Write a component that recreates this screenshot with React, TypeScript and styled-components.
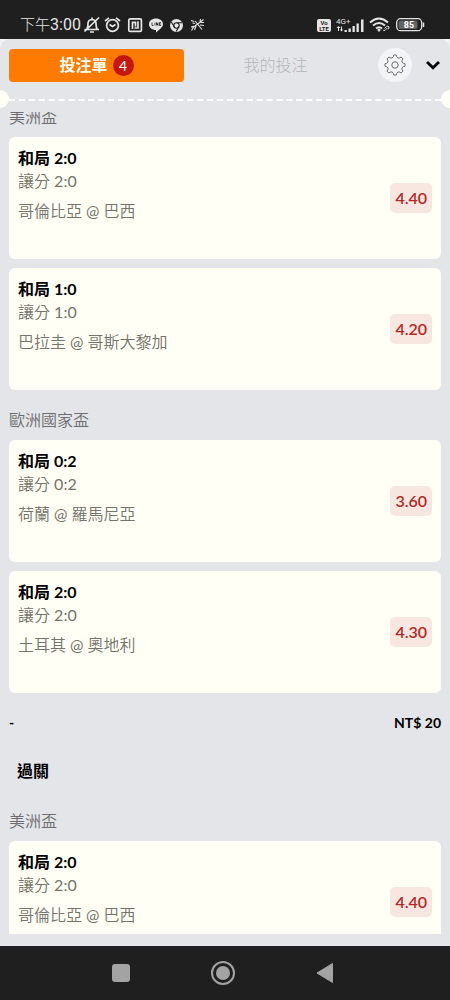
import React from 'react';
import styled, { createGlobalStyle, css } from 'styled-components';

interface Bet {
  title: string;
  handicap: string;
  teams: string;
  odds: string;
}

interface League {
  name: string;
  bets: Bet[];
}

const singles: League[] = [
  {
    name: '美洲盃',
    bets: [
      { title: '和局 2:0', handicap: '讓分 2:0', teams: '哥倫比亞 @ 巴西', odds: '4.40' },
      { title: '和局 1:0', handicap: '讓分 1:0', teams: '巴拉圭 @ 哥斯大黎加', odds: '4.20' },
    ],
  },
  {
    name: '歐洲國家盃',
    bets: [
      { title: '和局 0:2', handicap: '讓分 0:2', teams: '荷蘭 @ 羅馬尼亞', odds: '3.60' },
      { title: '和局 2:0', handicap: '讓分 2:0', teams: '土耳其 @ 奧地利', odds: '4.30' },
    ],
  },
];

const parlay: League[] = [
  {
    name: '美洲盃',
    bets: [
      { title: '和局 2:0', handicap: '讓分 2:0', teams: '哥倫比亞 @ 巴西', odds: '4.40' },
    ],
  },
];

const GlobalStyle = createGlobalStyle`
  * { box-sizing: border-box; }
  body {
    margin: 0;
    background: #1f1f1f;
    font-family: Lato, "Noto Sans CJK TC", sans-serif;
    font-size: 16px;
    line-height: 24px;
  }
  button {
    border: 0;
    padding: 0;
    margin: 0;
    background: none;
    font: inherit;
    cursor: pointer;
  }
  h2, h3, p { margin: 0; font: inherit; }
`;

const lightText = css`
  font-family: Lato, "Noto Sans CJK TC DemiLight", "Noto Sans CJK TC Light", "Noto Sans CJK TC", sans-serif;
  font-weight: 400;
`;

const Screen = styled.div`
  display: flex;
  flex-direction: column;
  height: 100vh;
`;

const StatusBar = styled.div`
  display: flex;
  flex: none;
  align-items: flex-end;
  justify-content: space-between;
  height: 39px;
  padding: 0 25px 2px 20px;
  color: #e6e6e6;
`;

const StatusGroup = styled.div<{ $gap: number }>`
  display: flex;
  align-items: center;
  height: 24px;
  gap: ${p => p.$gap}px;
`;

const Clock = styled.span`
  font: 300 15px/24px Roboto, "Noto Sans CJK TC", sans-serif;
  b { font-weight: 400; font-size: 16px; }
`;

const VoLte = styled.span`
  width: 14px;
  height: 13px;
  padding-top: 1px;
  border-radius: 2px;
  background: #e6e6e6;
  color: #1f1f1f;
  font: 700 6px/6px Roboto, sans-serif;
  text-align: center;
`;

const SlipFrame = styled.div`
  display: flex;
  flex: 1;
  flex-direction: column;
  min-height: 0;
  background: #f3f3f3;
`;

const Slip = styled.main`
  display: flex;
  flex: 1;
  flex-direction: column;
  min-height: 0;
  padding-bottom: 12px;
  border-radius: 10px 10px 0 0;
  background: #e4e5e8;
`;

const Header = styled.header`
  display: flex;
  flex: none;
  align-items: center;
  gap: 4px;
  padding: 9px 9px 0;
`;

const Tab = styled.button<{ $active?: boolean }>`
  display: flex;
  flex: 1;
  align-items: center;
  justify-content: center;
  gap: 5px;
  height: 33px;
  border-radius: 4px;
  color: #b4b5b7;
  font-weight: 300;
  ${p => p.$active && css`
    background: #ff7a00;
    color: #fffff5;
    font-weight: 700;
  `}
`;

const Count = styled.span`
  width: 21px;
  height: 21px;
  border-radius: 50%;
  background: #c5170f;
  font-size: 14px;
  font-weight: 400;
  line-height: 21px;
`;

const SettingsButton = styled.button`
  display: flex;
  align-items: center;
  justify-content: center;
  width: 34px;
  height: 34px;
  margin-left: 11px;
  border-radius: 50%;
  background: #f3f4f6;
`;

const CollapseButton = styled.button`
  display: flex;
  justify-content: center;
  width: 16px;
  margin-left: 9px;
`;

const Perforation = styled.div`
  display: flex;
  flex: none;
  align-items: center;
  justify-content: space-between;
  margin: 8px 0 4px;
  overflow: hidden;
  &::before, &::after {
    content: "";
    width: 18px;
    height: 18px;
    border-radius: 50%;
    background: #fffff5;
  }
  &::before { margin-left: -9px; }
  &::after { margin-right: -9px; }
`;

const Dashes = styled.div`
  flex: 1;
  padding-top: 1px;
  border-bottom: 2px dashed #fff;
`;

const Scroller = styled.div`
  flex: 1;
  min-height: 0;
  padding: 0 9px;
  overflow-y: auto;
  scrollbar-width: none;
`;

const LeagueName = styled.h3`
  padding: 18px 0 8px;
  color: #6c6d70;
  ${lightText}
`;

const BetList = styled.div`
  display: grid;
  gap: 9px;
`;

const Card = styled.article`
  display: flex;
  align-items: center;
  justify-content: space-between;
  min-height: 122px;
  padding: 9px;
  border-radius: 6px;
  background: #fffff5;
`;

const BetText = styled.div`
  align-self: flex-start;
  color: #74746c;
  ${lightText}
`;

const BetTitle = styled.h3`
  color: #000;
  font-family: Lato, "Noto Sans CJK TC", sans-serif;
  font-weight: 700;
`;

const Handicap = styled.p`
  line-height: 22px;
`;

const Teams = styled.p`
  margin-top: 7px;
`;

const Odds = styled.span`
  padding: 0 5px;
  border-radius: 5px;
  background: #f8e6e0;
  color: #b12a26;
  font-weight: 600;
  line-height: 30px;
`;

const Total = styled.div`
  display: flex;
  justify-content: space-between;
  margin: 18px 0 24px;
  font-size: 14px;
  font-weight: 700;
`;

const SectionTitle = styled.h2`
  padding: 0 8px 8px;
  font-weight: 700;
`;

const NavBar = styled.nav`
  display: flex;
  flex: none;
  align-items: center;
  justify-content: center;
  gap: 78px;
  height: 54px;
  padding-right: 4px;
`;

const NavButton = styled.button`
  width: 24px;
  height: 24px;
  svg { display: block; }
`;

const gearPath = (() => {
  const pt = (r: number, deg: number) => {
    const a = (deg * Math.PI) / 180;
    return `${(12 + r * Math.sin(a)).toFixed(2)} ${(12 - r * Math.cos(a)).toFixed(2)}`;
  };
  let d = `M${pt(10, -8)}`;
  for (let i = 0; i < 8; i++) {
    const a = i * 45;
    d += `Q${pt(10.3, a)} ${pt(10, a + 8)}L${pt(8.6, a + 11)}Q${pt(6.6, a + 22.5)} ${pt(8.6, a + 34)}L${pt(10, a + 37)}`;
  }
  return d + 'Z';
})();

const StatusIcons = () => (
  <svg width="122" height="18" viewBox="0 0 122 18" fill="none" stroke="#e6e6e6" strokeWidth="1.7" aria-hidden="true">
    <path d="M1.500 13.500H16M4 13Q5 11 5 7.500Q5 4 9 3.500Q13 4 13 7.500Q13 11 14 13M9 1.500V3.500M7 16H11M16 1.500L1.500 15.500" />
    <circle cx="29.500" cy="9.500" r="5.900" />
    <path d="M26.500 8.500L29.500 10.500L32.500 8.500M22 5L26 1.800M37 5L33 1.800" />
    <rect x="45.800" y="2.800" width="12.600" height="12.600" rx="1.500" />
    <path d="M49.500 13V6.300H52.500V10.500M51.500 12H55V5.200" />
    <path d="M73 2.500C77 2.500 80 4.800 80 8.200C80 11.500 76 13.500 73 16.500V14C69 14 66 11.500 66 8.200C66 4.800 69 2.500 73 2.500Z" fill="#e6e6e6" stroke="none" />
    <path d="M69 6.500V9.500H70.500M72 6.500V9.500M73.500 9.500V6.500L75 9.500V6.500M78 6.500H76.500V9.500H78M76.500 8H78" stroke="#1f1f1f" strokeWidth="0.800" />
    <circle cx="93.500" cy="9.500" r="6.500" fill="#e6e6e6" stroke="none" />
    <circle cx="93.500" cy="9.500" r="2.700" stroke="#1f1f1f" strokeWidth="1.100" />
    <path d="M93.500 6.800H99M91.200 10.800L88.300 6M95.800 10.800L93.200 15.500" stroke="#1f1f1f" strokeWidth="1.100" />
    <path d="M108 4.500L111 5.500M109.500 7L112 7.500M112 5L114.500 8L119 13.500M108 11L112 10L116 7L120.500 3.500M111 10.500L108.500 14.500M113 10L111.500 14M117 9L121 9.500M117.500 6.500L121 6.500M117.500 3L117 5.500" strokeWidth="1.100" />
  </svg>
);

const Signal = () => (
  <svg width="28" height="16" viewBox="0 0 28 16" fill="#e6e6e6" aria-hidden="true">
    <text x="0" y="7" fontFamily="Roboto" fontSize="8">4G+</text>
    <path d="M2.500 9L4.500 11H3V14H2V11H0.500ZM5.500 14.500L3.800 12.500H5V9.500H6V12.500H7.200Z" />
    <path d="M8.500 13h2.300v2h-2.300zM12.500 11.500h2.300v3.500h-2.300zM16.500 9h2.300v6h-2.300zM20.500 6.500h2.300v8.500h-2.300zM25 2.500h2.500v12.500H25z" />
  </svg>
);

const Wifi = () => (
  <svg width="22" height="16" viewBox="0 0 22 16" fill="none" stroke="#e6e6e6" strokeWidth="2" aria-hidden="true">
    <path d="M1 5.500Q10 -2.500 19 5.500M4 8.500Q10 3.500 16 8.500M7 11.500Q10 9 13 11.500" />
    <circle cx="10" cy="13" r="1.500" fill="#e6e6e6" stroke="none" />
    <path d="M15.500 11.500L17.500 9.500Q19 8.500 20 10Q20.500 11 19 12.300M18.500 10.800L16 13.300Q14.500 14.500 14.300 12.800" strokeWidth="1" />
  </svg>
);

const Battery = () => (
  <svg width="29" height="14" viewBox="0 0 29 14" fill="none" aria-hidden="true">
    <rect x="0.700" y="0.700" width="25" height="12" rx="4" stroke="#e6e6e6" strokeWidth="1.300" />
    <rect x="2.500" y="2.500" width="19" height="8.500" rx="2" fill="#626262" />
    <path d="M27.500 4.500V9" stroke="#e6e6e6" strokeWidth="1.500" />
    <text x="13" y="10" textAnchor="middle" fontFamily="Roboto" fontWeight="700" fontSize="9" fill="#fff">85</text>
  </svg>
);

const BetCard = ({ bet }: { bet: Bet }) => (
  <Card>
    <BetText>
      <BetTitle>{bet.title}</BetTitle>
      <Handicap>{bet.handicap}</Handicap>
      <Teams>{bet.teams}</Teams>
    </BetText>
    <Odds>{bet.odds}</Odds>
  </Card>
);

const LeagueGroup = ({ league }: { league: League }) => (
  <section>
    <LeagueName>{league.name}</LeagueName>
    <BetList>
      {league.bets.map((bet, i) => <BetCard key={i} bet={bet} />)}
    </BetList>
  </section>
);

export default function App() {
  const scroller = React.useRef<HTMLDivElement>(null);

  React.useLayoutEffect(() => {
    if (scroller.current) {
      scroller.current.scrollTop = 25;
    }
  }, []);

  return (
    <Screen>
      <GlobalStyle />
      <StatusBar>
        <StatusGroup $gap={2}>
          <Clock>下午<b>3:00</b></Clock>
          <StatusIcons />
        </StatusGroup>
        <StatusGroup $gap={5}>
          <VoLte>Vo<br />LTE</VoLte>
          <Signal />
          <Wifi />
          <Battery />
        </StatusGroup>
      </StatusBar>
      <SlipFrame>
        <Slip>
          <Header>
            <Tab $active>投注單<Count>4</Count></Tab>
            <Tab>我的投注</Tab>
            <SettingsButton aria-label="設定">
              <svg width="24" height="24" viewBox="0 0 24 24" fill="none" stroke="#6b6c6e">
                <path d={gearPath} strokeLinejoin="round" />
                <circle cx="12" cy="12" r="3.200" />
              </svg>
            </SettingsButton>
            <CollapseButton aria-label="收合">
              <svg width="16" height="10" viewBox="0 0 16 10" fill="none" stroke="#000" strokeWidth="2.800">
                <path d="M2 2L8 7.700L14 2" />
              </svg>
            </CollapseButton>
          </Header>
          <Perforation><Dashes /></Perforation>
          <Scroller ref={scroller}>
            {singles.map(league => <LeagueGroup key={league.name} league={league} />)}
            <Total>
              <span>-</span>
              <span>NT$ 20</span>
            </Total>
            <SectionTitle>過關</SectionTitle>
            {parlay.map(league => <LeagueGroup key={league.name} league={league} />)}
          </Scroller>
        </Slip>
      </SlipFrame>
      <NavBar>
        <NavButton aria-label="最近">
          <svg width="24" height="24" viewBox="0 0 24 24"><rect x="3" y="3" width="18" height="18" rx="3" fill="#a3a3a3" /></svg>
        </NavButton>
        <NavButton aria-label="主畫面">
          <svg width="24" height="24" viewBox="0 0 24 24">
            <circle cx="12" cy="12" r="11" fill="none" stroke="#a3a3a3" strokeWidth="2" />
            <circle cx="12" cy="12" r="7" fill="#a3a3a3" />
          </svg>
        </NavButton>
        <NavButton aria-label="返回">
          <svg width="24" height="24" viewBox="0 0 24 24"><path d="M4 12L19.500 2.500V21.500Z" fill="#a3a3a3" stroke="#a3a3a3" strokeLinejoin="round" /></svg>
        </NavButton>
      </NavBar>
    </Screen>
  );
}
